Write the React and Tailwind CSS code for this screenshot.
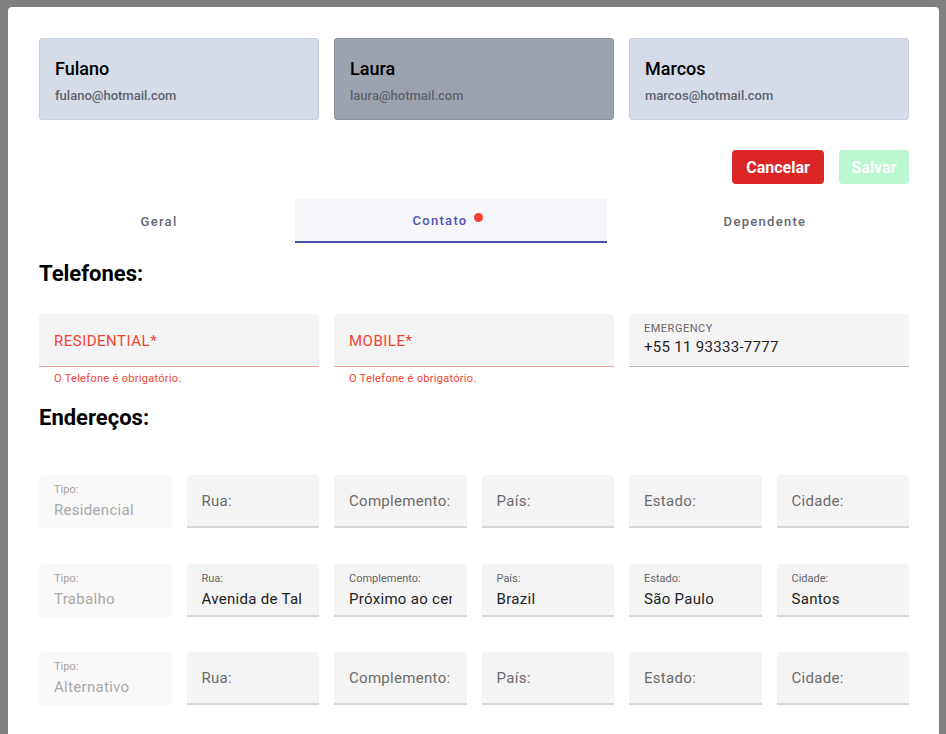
import React from "react";

const people = [
  { name: "Fulano", email: "fulano@hotmail.com", active: false },
  { name: "Laura", email: "laura@hotmail.com", active: true },
  { name: "Marcos", email: "marcos@hotmail.com", active: false },
];

const addresses = [
  { tipo: "Residencial", rua: "", complemento: "", pais: "", estado: "", cidade: "" },
  {
    tipo: "Trabalho",
    rua: "Avenida de Tal",
    complemento: "Próximo ao centro",
    pais: "Brazil",
    estado: "São Paulo",
    cidade: "Santos",
  },
  { tipo: "Alternativo", rua: "", complemento: "", pais: "", estado: "", cidade: "" },
];

function TipoField({ value }) {
  return (
    <div className="h-[53px] rounded-t-[4px] bg-[#f9f9f9] px-[15px] pt-[8px] overflow-hidden">
      <div className="text-[11px] leading-[14px] text-[#a3a3a3]">Tipo:</div>
      <div className="mt-[3px] text-[15px] leading-[20px] text-[#a8a8a8] tracking-[0.3px]">{value}</div>
    </div>
  );
}

function AddrField({ label, value }) {
  return (
    <div className="h-[53px] rounded-t-[4px] bg-[#f4f4f4] border-b-2 border-[#d8d8d8] px-[15px] overflow-hidden">
      {value ? (
        <div className="pt-[8px]">
          <div className="text-[11px] leading-[14px] text-[#666]">{label}</div>
          <input
            readOnly
            value={value}
            className="mt-[3px] block w-full bg-transparent outline-none text-[15px] leading-[20px] h-[20px] text-[#222] tracking-[0.3px]"
          />
        </div>
      ) : (
        <div className="pt-[16px] text-[15px] leading-[20px] text-[#6b6b6b] whitespace-nowrap tracking-[0.3px]">{label}</div>
      )}
    </div>
  );
}

function PhoneError({ label }) {
  return (
    <div>
      <div className="h-[53px] rounded-t-[4px] bg-[#f4f4f4] border-b border-[#f0a0a0] px-[15px] pt-[17px]">
        <div className="text-[15px] leading-[20px] text-[#f44336] tracking-[0.5px]">{label}*</div>
      </div>
      <div className="px-[15px] pt-[5px] text-[11px] leading-[14px] text-[#f44336] tracking-[0.3px]">
        O Telefone é obrigatório.
      </div>
    </div>
  );
}

export default function App() {
  return (
    <div className="min-h-[734px] bg-[#808080] pt-[7px] pl-[8px] pr-[7px] font-['Roboto',sans-serif]">
      <div className="min-h-[727px] bg-white rounded-t-[4px] pt-[31px] pl-[31px] pr-[30px] pb-[30px]">
        {/* Person cards */}
        <div className="grid grid-cols-3 gap-[15px]">
          {people.map((p) => (
            <div
              key={p.name}
              className={`h-[82px] rounded-[3px] border px-[15px] pt-[19px] ${
                p.active ? "bg-[#9ca3af] border-[#8c939f]" : "bg-[#d5dce8] border-[#c6cedc]"
              }`}
            >
              <div className="text-[18px] leading-[22px] text-black font-medium">{p.name}</div>
              <div className="mt-[8px] text-[13px] leading-[16px] text-[#5f636b] font-medium">{p.email}</div>
            </div>
          ))}
        </div>

        {/* Actions */}
        <div className="mt-[30px] flex justify-end gap-[15px]">
          <button className="h-[34px] w-[92px] rounded-[4px] bg-[#dc2626] text-white text-[16px] font-bold pt-[1px]">
            Cancelar
          </button>
          <button className="h-[34px] w-[70px] rounded-[4px] bg-[#bbf7d0] text-white text-[16px] font-bold pt-[1px]">
            Salvar
          </button>
        </div>

        {/* Tabs */}
        <div className="mt-[15px] flex h-[44px] text-[13px] font-medium tracking-[1.3px]">
          <div className="w-[256px] flex items-center justify-center pr-4 pt-[1px] text-[#66676e]">Geral</div>
          <div className="w-[312px] flex items-center justify-center pt-[1px] pr-[7px] bg-[#f6f6fb] border-b-2 border-[#4652b0] text-[#4a55ad]">
            <span className="leading-[16px]">Contato</span>
            <span className="ml-[6px] mb-[7px] w-[9px] h-[9px] rounded-full bg-[#f44336]" />
          </div>
          <div className="flex-1 flex items-center justify-center pl-[14px] pt-[1px] text-[#66676e]">Dependente</div>
        </div>

        {/* Telefones */}
        <h2 className="mt-[17px] text-[22px] leading-[28px] font-bold text-black">Telefones:</h2>
        <div className="mt-[26px] grid grid-cols-3 gap-[15px]">
          <PhoneError label="RESIDENTIAL" />
          <PhoneError label="MOBILE" />
          <div className="h-[53px] rounded-t-[4px] bg-[#f4f4f4] border-b border-[#b8b8b8] px-[15px] pt-[8px]">
            <div className="text-[11px] leading-[14px] text-[#666] tracking-[0.5px]">EMERGENCY</div>
            <div className="mt-[1px] text-[15px] leading-[20px] text-[#222] tracking-[0.3px]">+55 11 93333-7777</div>
          </div>
        </div>

        {/* Endereços */}
        <h2 className="mt-[18px] text-[22px] leading-[28px] font-bold text-black">Endereços:</h2>
        <div className="mt-[43px] flex flex-col gap-[35.5px]">
          {addresses.map((a) => (
            <div key={a.tipo} className="grid grid-cols-6 gap-[15px]">
              <TipoField value={a.tipo} />
              <AddrField label="Rua:" value={a.rua} />
              <AddrField label="Complemento:" value={a.complemento} />
              <AddrField label="País:" value={a.pais} />
              <AddrField label="Estado:" value={a.estado} />
              <AddrField label="Cidade:" value={a.cidade} />
            </div>
          ))}
        </div>
      </div>
    </div>
  );
}
